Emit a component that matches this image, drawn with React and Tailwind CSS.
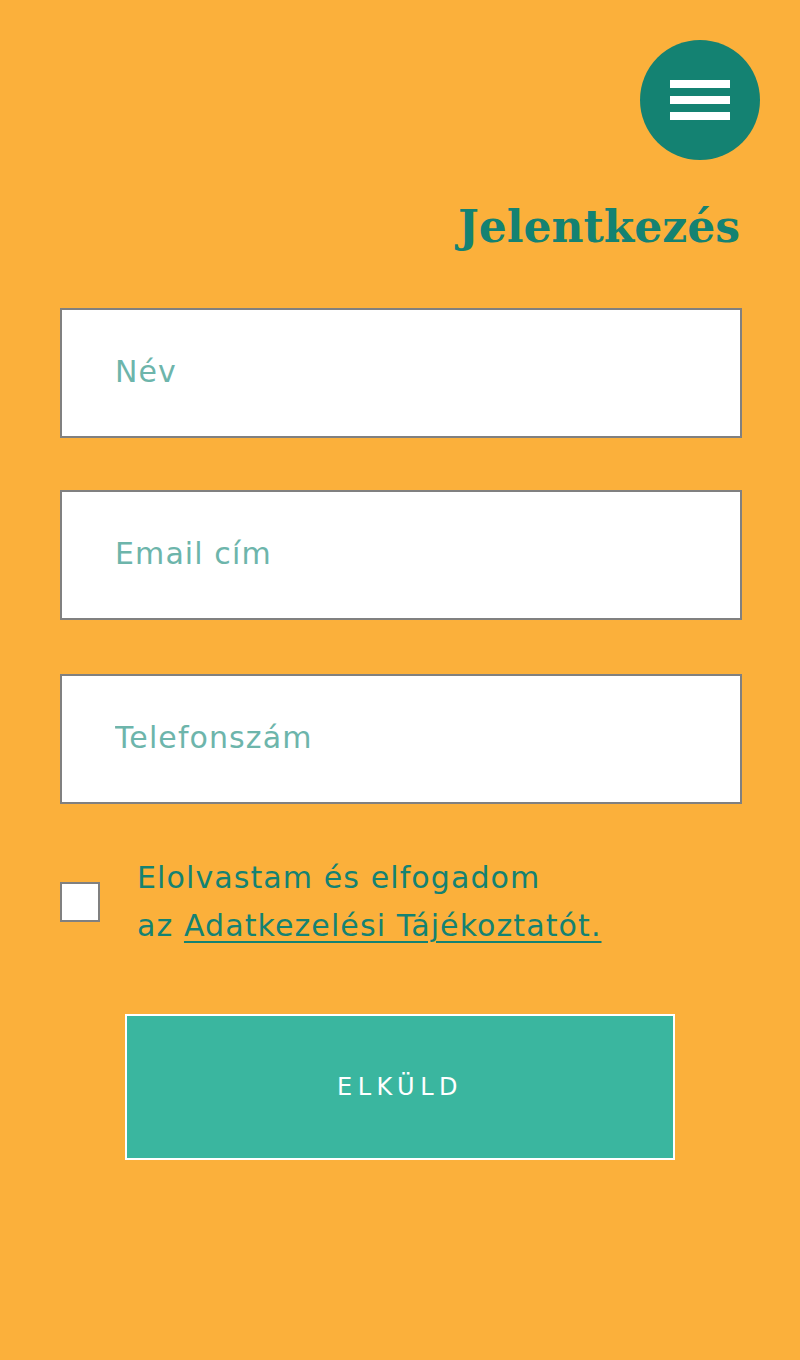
import { useState } from "react";

const fields = ["Név", "Email cím", "Telefonszám"];

const App = () => {
  const [accepted, setAccepted] = useState(false);

  return (
    <div className="min-h-[1360px] bg-[#fbb03b] font-['DejaVu_Sans',sans-serif]">
      <div className="flex justify-end pt-10 pr-10">
        <button className="w-[120px] h-[120px] rounded-full bg-[#148272] flex flex-col items-center justify-center gap-2">
          <span className="block w-[60px] h-2 bg-white" />
          <span className="block w-[60px] h-2 bg-white" />
          <span className="block w-[60px] h-2 bg-white" />
        </button>
      </div>

      <div className="px-[60px] pr-[58px]">
        <h1 className="mt-[34px] text-right pr-[2px] font-['DejaVu_Serif',serif] font-bold text-[44px] leading-[66px] text-[#148272]">
          Jelentkezés
        </h1>

        <form className="mt-[48px] flex flex-col" onSubmit={(e) => e.preventDefault()}>
          {fields.map((f, i) => (
            <input
              key={f}
              placeholder={f}
              className={`h-[130px] w-full border-2 border-[#808080] bg-white pl-[53px] pb-[4px] text-[30px] tracking-[1.1px] text-[#148272] placeholder:text-[#6db5ab] outline-none ${
                i === 1 ? "mt-[52px]" : i === 2 ? "mt-[54px]" : ""
              }`}
            />
          ))}
        </form>

        <div className="mt-[50px] flex items-center gap-[37px]">
          <button
            onClick={() => setAccepted(!accepted)}
            className={`w-[40px] h-[40px] shrink-0 border-2 border-[#808080] ${accepted ? "bg-[#148272]" : "bg-white"}`}
          />
          <p className="text-[30px] leading-[48px] tracking-[1.1px] text-[#148272]">
            Elolvastam és elfogadom
            <br />
            az <a href="#" className="underline underline-offset-[5px] decoration-2">Adatkezelési Tájékoztatót.</a>
          </p>
        </div>

        <div className="mt-[64px] flex justify-center pr-[2px]">
          <button className="w-[550px] h-[146px] border-2 border-white bg-[#3ab69f] text-white text-[24px] tracking-[5.5px]">
            ELKÜLD
          </button>
        </div>
      </div>
    </div>
  );
};

export default App;
